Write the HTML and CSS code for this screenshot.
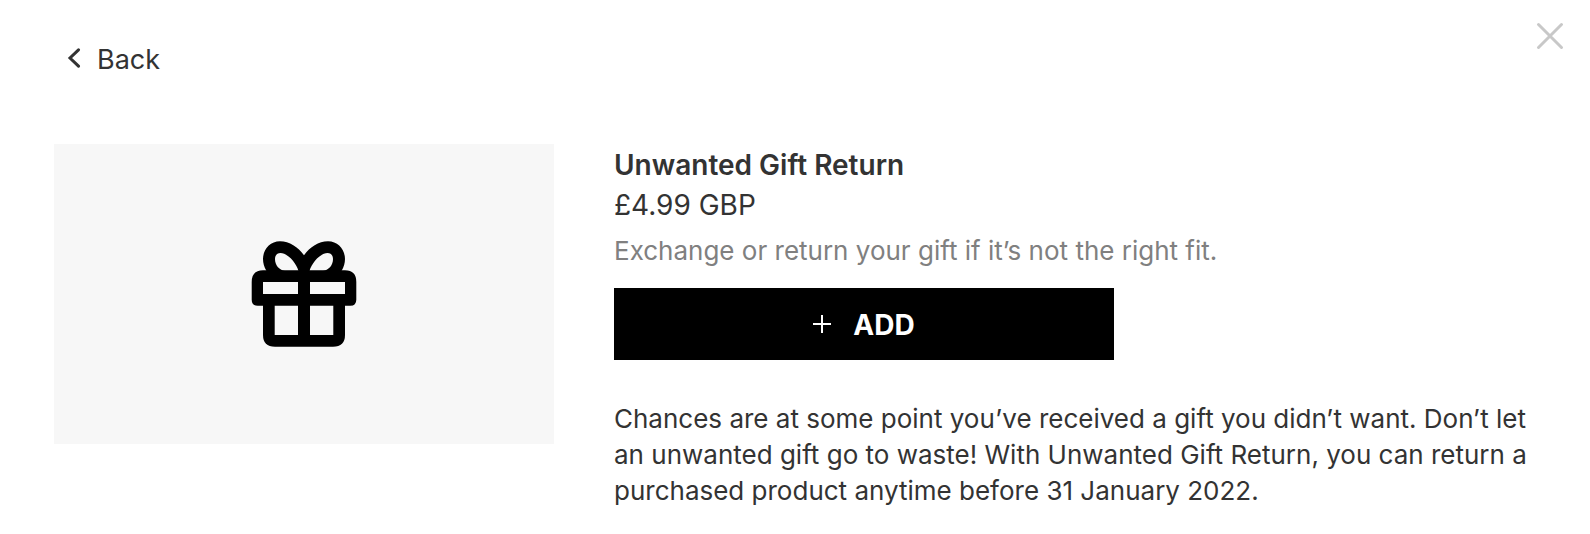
FILE: index.html
```html
<!DOCTYPE html>
<html lang="en">
<head>
<meta charset="utf-8">
<title>Unwanted Gift Return</title>
<link rel="stylesheet" href="styles.css">
</head>
<body>
<main class="dialog">
  <header class="topbar">
    <button class="back" type="button">
      <svg class="back-icon" viewBox="0 0 14 20" aria-hidden="true"><path d="M11.500 1.800 3 10l8.500 8.200"/></svg>
      <span>Back</span>
    </button>
    <button class="close" type="button" aria-label="Close">
      <svg class="close-icon" viewBox="0 0 28 28" aria-hidden="true"><path d="M2.500 2.500l23 23M25.500 2.500l-23 23"/></svg>
    </button>
  </header>
  <section class="product">
    <div class="picture">
      <svg class="gift" viewBox="0 0 106 106" aria-hidden="true">
        <path d="M15.500 30C7 16 15 .3 29 .3c9.500 0 18 5.700 24 14C59 6 67.500.3 77 .3c14 0 22 15.700 13.500 29.700zM34 30H47.500C45 21 36 12 29.500 12c-3.500 0-5.500 2.500-5.500 6C24 24 28 29 34 30zM72 30H58.500C61 21 70 12 76.500 12c3.500 0 5.500 2.500 5.500 6C82 24 78 29 72 30z"/>
        <path d="M12 29.300H94Q105.300 29.300 105.300 41V58.700Q105.300 64.700 99.300 64.700H94V94Q94 105.700 82 105.700H24Q12 105.700 12 94V64.700H6.700Q.7 64.700.7 58.700V41Q.7 29.300 12 29.300zM12 41V53H47V41zM59 41V53H94V41zM23.700 64.700V94H47V64.700zM59 64.700V94H82.300V64.700z"/>
      </svg>
    </div>
    <div class="details">
      <h1 class="title">Unwanted Gift Return</h1>
      <p class="price">£4.99 GBP</p>
      <p class="summary">Exchange or return your gift if it’s not the right fit.</p>
      <button class="add" type="button">
        <svg class="plus" viewBox="0 0 18 18" aria-hidden="true"><path d="M9 0v18M0 9h18"/></svg>
        <span>ADD</span>
      </button>
      <p class="description">Chances are at some point you’ve received a gift you didn’t want. Don’t let an unwanted gift go to waste! With Unwanted Gift Return, you can return a purchased product anytime before 31 January 2022.</p>
    </div>
  </section>
</main>
</body>
</html>
```
FILE: styles.css
```css
* { box-sizing: border-box; }
body { margin: 0; background: #fff; color: #333; font-family: Inter, "Liberation Sans", sans-serif; }
button { border: 0; padding: 0; background: none; color: inherit; font: inherit; }
svg { display: block; fill: none; stroke: currentColor; }
h1, p { margin: 0; }
.dialog { padding: 20px 24px 24px 54px; }
.topbar { display: flex; justify-content: space-between; align-items: flex-start; height: 124px; }
.back { display: flex; align-items: center; gap: 16px; margin: 23px 0 0 13px; font-size: 27px; line-height: 34px; }
.back-icon { width: 14px; height: 20px; margin-bottom: 4px; stroke-width: 3; stroke-linecap: round; }
.close { padding: 2px; color: #c8c8c8; }
.close-icon { width: 28px; height: 28px; stroke-width: 3; stroke-linecap: round; }
.product { display: grid; grid-template-columns: 500px minmax(0, 1fr); gap: 60px; align-items: start; padding-right: 36px; }
.picture { display: flex; align-items: center; justify-content: center; height: 300px; background: #f7f7f7; }
.gift { width: 106px; height: 106px; fill: #000; fill-rule: evenodd; stroke: none; }
.details { padding-top: 1px; }
.title { font-size: 28px; line-height: 40px; font-weight: 600; }
.price { font-size: 28px; line-height: 40px; }
.summary { margin: 6px 0 17px; color: #808080; font-size: 26px; line-height: 40px; }
.add { display: flex; align-items: center; justify-content: center; gap: 22px; width: 100%; max-width: 500px; height: 72px; padding-top: 2px; background: #000; color: #fff; font-size: 28px; font-weight: 700; }
.plus { width: 18px; height: 18px; margin-bottom: 2px; stroke-width: 2; }
.description { margin-top: 41px; font-size: 26px; line-height: 36px; }
```
